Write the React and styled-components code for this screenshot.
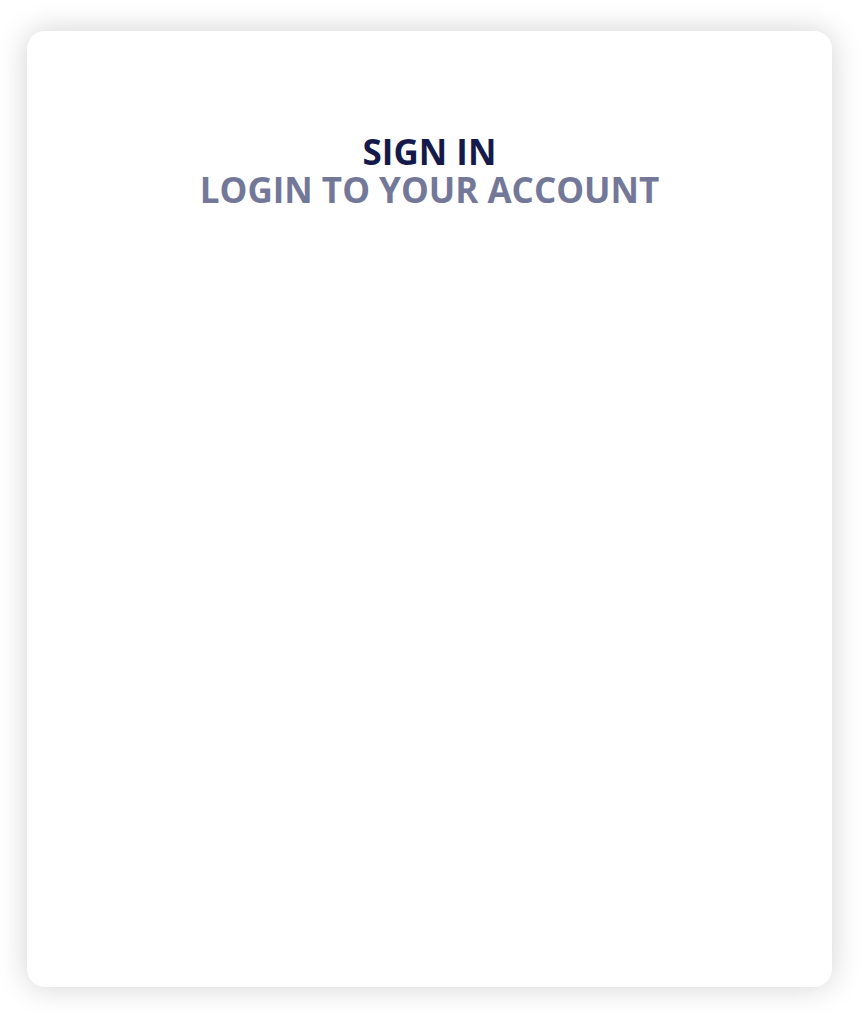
import styled, { createGlobalStyle } from "styled-components";

const GlobalStyle = createGlobalStyle`
  html, body {
    margin: 0;
    padding: 0;
    background: #ffffff;
    font-family: "Open Sans", "Noto Sans", sans-serif;
  }
`;

const Page = styled.div`
  padding: 31px 35px 36px 27px;
`;

const Card = styled.div`
  height: 956px;
  background: #fff;
  border-radius: 18px;
  box-shadow: 0px 0px 30px rgba(0, 0, 0, 0.18);
  padding-top: 102px;
  box-sizing: border-box;
`;

const Heading = styled.div`
  text-align: center;
  font-weight: 700;
  font-size: 35px;
  line-height: 38px;
  text-transform: uppercase;
`;

const Title = styled.div`
  color: #151a4a;
`;

const Subtitle = styled.div`
  color: #737899;
`;

const App = () => {
  return (
    <Page>
      <GlobalStyle />
      <Card>
        <Heading>
          <Title>Sign in</Title>
          <Subtitle>Login to your account</Subtitle>
        </Heading>
      </Card>
    </Page>
  );
};

export default App;
